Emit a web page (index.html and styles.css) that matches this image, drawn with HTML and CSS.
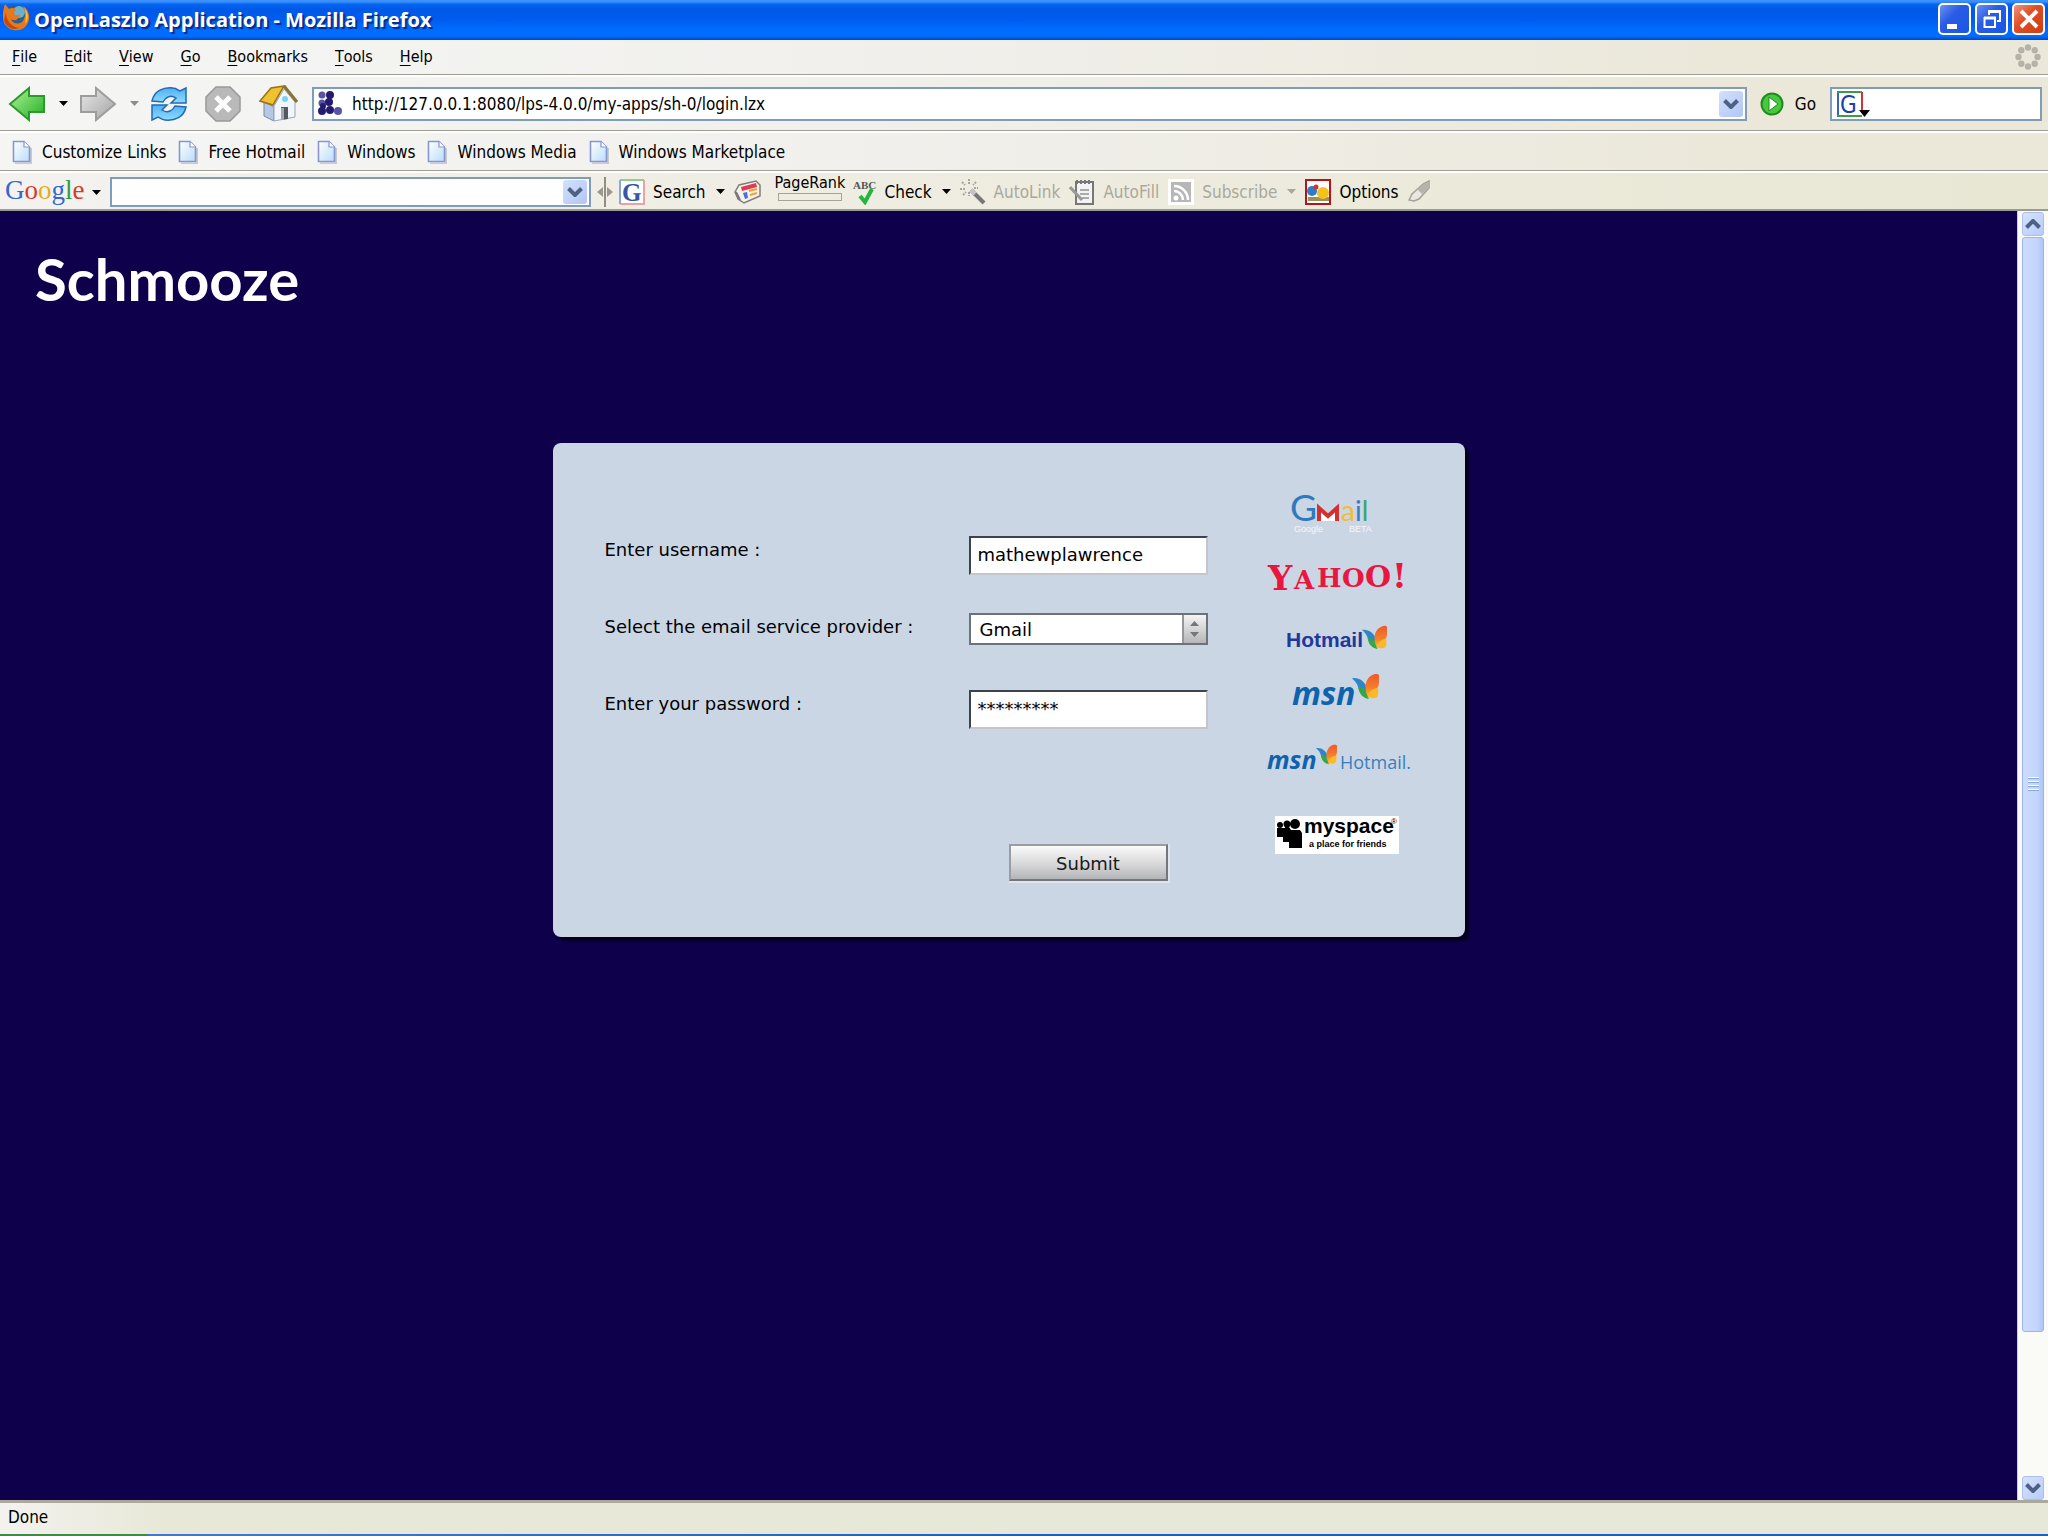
FILE: index.html
```html
<!DOCTYPE html>
<html lang="en">
<head>
    <meta charset="utf-8">
    <link rel="stylesheet" href="styles.css">

    <title>OpenLaszlo Application - Mozilla Firefox</title>
</head>
<body>
    <!-- shared icon shapes -->
    <svg class="defs" width="0" height="0" aria-hidden="true">
        <defs>
            <linearGradient id="greenFill" x1="0" y1="0" x2="1" y2="1">
                <stop offset="0" stop-color="#b4f49a"/><stop offset="1" stop-color="#1fae22"/>
            </linearGradient>
            <linearGradient id="greyFill" x1="0" y1="0" x2="1" y2="1">
                <stop offset="0" stop-color="#e8e8e8"/><stop offset="1" stop-color="#a4a4a4"/>
            </linearGradient>
            <linearGradient id="blueFill" x1="0" y1="0" x2="0" y2="1">
                <stop offset="0" stop-color="#4fb0f4"/><stop offset="1" stop-color="#8fdcff"/>
            </linearGradient>
            <linearGradient id="pageFill" x1="0" y1="0" x2="1" y2="1">
                <stop offset="0" stop-color="#ffffff"/><stop offset="1" stop-color="#b9dcfa"/>
            </linearGradient>
            <linearGradient id="wingFill" x1="0" y1="0" x2="0" y2="1">
                <stop offset="0" stop-color="#ee5a2c"/><stop offset="0.6" stop-color="#f4802c"/><stop offset="1" stop-color="#f9c62c"/>
            </linearGradient>
        </defs>
        <symbol id="page" viewBox="0 0 20 24">
            <path d="M3 23.500H19V8" fill="none" stroke="#c9c9d2" stroke-width="2"/>
            <path d="M1.500 1.500H12L17.500 7V21.500H1.500Z" fill="url(#pageFill)" stroke="#8796cf" stroke-width="1.600"/>
            <path d="M12 1.500V7H17.500" fill="#fff" stroke="#8796cf" stroke-width="1.200"/>
        </symbol>
        <symbol id="down" viewBox="0 0 9 5">
            <path d="M0 0H9L4.500 5Z" fill="currentColor"/>
        </symbol>
        <symbol id="chevron" viewBox="0 0 16 10">
            <path d="M1.500 1.500L8 8L14.500 1.500" fill="none" stroke="#4d6185" stroke-width="4"/>
        </symbol>
        <symbol id="butterfly" viewBox="0 0 26 26">
            <path d="M0 5C7 4 12 8 15 15L16 24C11 22 7 19 6 14C5 10 3 8 0 5Z" fill="#2e86c8"/>
            <path d="M6 14C9 13 13 15 15 18L16 25C10 24 7 20 6 14Z" fill="#35a648"/>
            <path d="M14 20C11 10 15 3 22 1C27 0 27 4 26 9C26 15 22 18 16 24Z" fill="url(#wingFill)"/>
            <path d="M15 24C16 18 20 15 25 14C26 20 25 24 22 24C19 25 17 23 15 24Z" fill="#fbb92a"/>
        </symbol>
    </svg>

    <header class="titlebar">
        <svg width="28" height="28" viewBox="0 0 28 28" aria-hidden="true">
            <circle cx="15" cy="13" r="11" fill="#2f5f8f"/>
            <circle cx="17" cy="9" r="6" fill="#6fb0c8"/>
            <path d="M3 1L7 6C10 4 13 5 14 7L11 11C13 12 15 12 18 12C16 18 11 18 9 16C11 22 20 22 22 16C24 12 23 7 21 3C28 7 29 17 24 23C18 30 6 28 2 20C0 14 1 7 3 1Z" fill="#e8791b"/>
            <path d="M4 9C4 16 8 24 17 25C10 28 3 23 2 17Z" fill="#c04a10"/>
            <path d="M22 5C27 10 27 17 23 21C24 16 25 10 22 5Z" fill="#fbc23a"/>
        </svg>
        <h1 class="title">OpenLaszlo Application - Mozilla Firefox</h1>
        <div class="window-buttons">
            <button class="win-btn" type="button" aria-label="Minimize">
                <svg width="26" height="26" viewBox="0 0 26 26"><path d="M5 18H15V23H5Z" fill="#fff"/></svg>
            </button>
            <button class="win-btn" type="button" aria-label="Restore">
                <svg width="26" height="26" viewBox="0 0 26 26"><path d="M10 9V5H21V15H18M5.500 12V21H16V12Z" fill="none" stroke="#fff" stroke-width="2"/><path d="M9 5.500H22M5 12H17" stroke="#fff" stroke-width="3"/></svg>
            </button>
            <button class="win-btn win-btn-close" type="button" aria-label="Close">
                <svg width="26" height="26" viewBox="0 0 26 26"><path d="M5 5L21 21M21 5L5 21" stroke="#fff" stroke-width="4"/></svg>
            </button>
        </div>
    </header>

    <nav class="bar menubar">
        <button type="button"><u>F</u>ile</button>
        <button type="button"><u>E</u>dit</button>
        <button type="button"><u>V</u>iew</button>
        <button type="button"><u>G</u>o</button>
        <button type="button"><u>B</u>ookmarks</button>
        <button type="button"><u>T</u>ools</button>
        <button type="button"><u>H</u>elp</button>
        <svg class="throbber" width="26" height="26" viewBox="0 0 26 26" fill="#b5b2aa" aria-hidden="true">
            <circle cx="13" cy="3.500" r="3.200"/><circle cx="19.700" cy="6.300" r="3.200"/><circle cx="22.500" cy="13" r="3.200"/><circle cx="19.700" cy="19.700" r="3.200"/>
            <circle cx="13" cy="22.500" r="3.200"/><circle cx="6.300" cy="19.700" r="3.200"/><circle cx="3.500" cy="13" r="3.200"/><circle cx="6.300" cy="6.300" r="3.200"/>
        </svg>
    </nav>

    <div class="bar navbar">
        <button type="button" aria-label="Back">
            <svg width="38" height="36" viewBox="0 0 38 36"><path d="M2 18L21 2V10H36V26H21V34Z" fill="url(#greenFill)" stroke="#2b9a2c" stroke-width="2"/></svg>
        </button>
        <button class="drop" type="button" aria-label="Back history"><svg width="9" height="5"><use href="#down"/></svg></button>
        <button type="button" aria-label="Forward">
            <svg width="38" height="36" viewBox="0 0 38 36"><path d="M36 18L17 2V10H2V26H17V34Z" fill="url(#greyFill)" stroke="#9d9d9d" stroke-width="2"/></svg>
        </button>
        <button class="drop drop-grey" type="button" aria-label="Forward history"><svg width="9" height="5"><use href="#down"/></svg></button>
        <button type="button" aria-label="Reload">
            <svg width="38" height="36" viewBox="0 0 38 36" fill="url(#blueFill)" stroke="#2269b8" stroke-width="1.500">
                <path d="M2 15C4 5 13 1 23 2C26 2 28 4 30 5L36 2V17H21L26 12C20 8 15 12 13 16Z"/>
                <path d="M36 21C34 31 25 35 15 34C12 34 10 32 8 31L2 34V19H17L12 24C18 28 23 24 25 20Z"/>
            </svg>
        </button>
        <button class="nav-stop" type="button" aria-label="Stop">
            <svg width="38" height="36" viewBox="0 0 38 36"><path d="M12 1H26L36 11V25L26 35H12L2 25V11Z" fill="#b9b9b9" stroke="#999" stroke-width="1.500"/><path d="M12 11L26 25M26 11L12 25" stroke="#fff" stroke-width="5"/></svg>
        </button>
        <button class="nav-home" type="button" aria-label="Home">
            <svg width="40" height="38" viewBox="0 0 40 38">
                <path d="M6 17L16 22V36L6 31Z" fill="#b6c8e4" stroke="#7689ac"/>
                <path d="M16 21L26 4L37 17V32L16 36Z" fill="#f1f5fc" stroke="#9aa5b9"/>
                <path d="M23 22H30V34L23 35Z" fill="#55585f"/><path d="M23 23H26V35H23Z" fill="#a3a9b4"/>
                <circle cx="27" cy="14" r="3" fill="#7fd0f5"/>
                <path d="M2 16L13 3L26 1L15 20Z" fill="#f0c22f" stroke="#98731a" stroke-width="1.500"/>
                <path d="M26 1L39 17" stroke="#8a7232" stroke-width="3"/>
            </svg>
        </button>
        <div class="field url">
            <svg width="25" height="25" viewBox="0 0 25 25" fill="#241a6e" aria-hidden="true">
                <circle cx="4" cy="4" r="3.500" fill="#5a54a0"/><circle cx="12" cy="4" r="4"/><circle cx="4" cy="12" r="3.500" fill="#5a54a0"/><circle cx="11" cy="11" r="4"/>
                <circle cx="4" cy="20" r="4"/><circle cx="12" cy="19" r="4"/><circle cx="20" cy="20" r="4" fill="#5a54a0"/><circle cx="5" cy="15" r="3"/>
            </svg>
            <input type="text" aria-label="Location" value="http://127.0.0.1:8080/lps-4.0.0/my-apps/sh-0/login.lzx">
            <button class="combo-btn" type="button" aria-label="Show history"><svg width="16" height="10"><use href="#chevron"/></svg></button>
        </div>
        <button class="go" type="button">
            <svg width="24" height="24" viewBox="0 0 24 24" aria-hidden="true"><circle cx="12" cy="12" r="10.500" fill="#48c83c" stroke="#208c1e" stroke-width="2"/><path d="M9 5L18 12L9 19Z" fill="#fff" stroke="#208c1e"/></svg>
            Go
        </button>
        <div class="field search">
            <svg width="36" height="28" viewBox="0 0 36 28" aria-hidden="true">
                <path d="M2 26V2" stroke="#3a62c8" stroke-width="2"/><path d="M1 2H26M1 26H26" stroke="#3f9c46" stroke-width="2"/><path d="M26 2V22" stroke="#d8322c" stroke-width="2"/>
                <text class="g-plain" x="4" y="23">G</text>
                <path d="M23 20H34L28.500 27Z" fill="#000"/>
            </svg>
            <input type="text" aria-label="Search the web">
        </div>
    </div>

    <nav class="bar bookmarks">
        <a href="#"><svg width="20" height="24"><use href="#page"/></svg>Customize Links</a>
        <a href="#"><svg width="20" height="24"><use href="#page"/></svg>Free Hotmail</a>
        <a href="#"><svg width="20" height="24"><use href="#page"/></svg>Windows</a>
        <a href="#"><svg width="20" height="24"><use href="#page"/></svg>Windows Media</a>
        <a href="#"><svg width="20" height="24"><use href="#page"/></svg>Windows Marketplace</a>
    </nav>

    <div class="bar googlebar">
        <button class="google-logo" type="button" aria-label="Google"><span class="c-blue">G</span><span class="c-red">o</span><span class="c-yellow">o</span><span class="c-blue">g</span><span class="c-green">l</span><span class="c-red">e</span><svg width="9" height="5"><use href="#down"/></svg></button>
        <div class="field google-field">
            <input type="text" aria-label="Google search">
            <button class="combo-btn" type="button" aria-label="Show searches"><svg width="16" height="10"><use href="#chevron"/></svg></button>
        </div>
        <svg class="grip" width="16" height="30" viewBox="0 0 16 30" aria-hidden="true"><path d="M8 0V30" stroke="#8f8d84" stroke-width="2"/><path d="M6 10V20L0 15ZM10 10V20L16 15Z" fill="#9a988f"/></svg>
        <button class="tool" type="button">
            <svg width="26" height="26" viewBox="0 0 26 26"><path d="M1 1H25" stroke="#8fd08f" stroke-width="2"/><path d="M25 1V25H1" fill="none" stroke="#e9a3a0" stroke-width="2"/><path d="M1 1V25" stroke="#86a8e8" stroke-width="2"/><path d="M2 2H24V24H2Z" fill="#fff"/><text class="g-serif" x="3" y="22">G</text></svg>
            Search
            <svg class="arrow" width="9" height="5"><use href="#down"/></svg>
        </button>
        <button class="tool" type="button" aria-label="News">
            <svg width="27" height="24" viewBox="0 0 27 24"><path d="M1 12L5 5L22 1L26 5V16L10 23L4 19Z" fill="#f4f1e8" stroke="#7d7d7d" stroke-width="1.500"/><path d="M7 7L22 3L23 7L8 11Z" fill="#e03a55"/><path d="M9 13L13 12L14 18L11 19Z" fill="#4a6fd8"/><path d="M15 11L23 9M16 15L23 13" stroke="#f0a030" stroke-width="2"/><path d="M2 12L6 20" stroke="#777" stroke-width="2"/></svg>
        </button>
        <div class="pagerank"><span>PageRank</span><i></i></div>
        <button class="tool" type="button">
            <svg width="24" height="26" viewBox="0 0 24 26"><text class="abc" x="0" y="10">ABC</text><path d="M7 17L12 23L19 10" fill="none" stroke="#22b63c" stroke-width="4"/></svg>
            Check
            <svg class="arrow" width="9" height="5"><use href="#down"/></svg>
        </button>
        <button class="tool tool-off" type="button">
            <svg width="26" height="26" viewBox="0 0 26 26" fill="none"><path d="M9 0V5M2 3L5 6M16 3L13 6M0 10H5M14 9H18M3 16L6 13M9 13V17" stroke="#a7a59c" stroke-width="2" stroke-dasharray="2 1"/><path d="M11 11L24 24" stroke="#777" stroke-width="4"/><path d="M11 11L15 15" stroke="#c5c5c5" stroke-width="4"/></svg>
            AutoLink
        </button>
        <button class="tool tool-off" type="button">
            <svg width="26" height="26" viewBox="0 0 26 26"><path d="M7 3H24V25H7Z" fill="#f3f3f3" stroke="#777" stroke-width="2"/><path d="M8 1V5M12 1V5M16 1V5M20 1V5" stroke="#777" stroke-width="2"/><path d="M11 11H20M11 15H20M13 19H20" stroke="#aaa" stroke-width="2"/><path d="M1 8L13 21" stroke="#999" stroke-width="3"/></svg>
            AutoFill
        </button>
        <button class="tool tool-off" type="button">
            <svg width="26" height="26" viewBox="0 0 26 26"><path d="M0 0H26V26H0Z" fill="#fff"/><path d="M3 3H23V23H3Z" fill="#b7b7b7"/><g fill="none" stroke="#fff" stroke-width="2.500"><path d="M6 12A9 9 0 0 1 15 21"/><path d="M6 7A14 14 0 0 1 20 21"/></g><circle cx="8" cy="19" r="2.500" fill="#fff"/></svg>
            Subscribe
            <svg class="arrow" width="9" height="5"><use href="#down"/></svg>
        </button>
        <button class="tool" type="button">
            <svg width="26" height="26" viewBox="0 0 26 26"><path d="M1 1H25V25H1Z" fill="#fff" stroke="#b3151b" stroke-width="2"/><path d="M3 18H24V22H3Z" fill="#9c9158"/><circle cx="7" cy="12" r="5" fill="#2d7ccc"/><circle cx="11" cy="8" r="2.500" fill="#d8322c"/><circle cx="18" cy="14" r="6" fill="#f3c31c"/></svg>
            Options
        </button>
        <button class="tool" type="button" aria-label="Highlight">
            <svg width="26" height="26" viewBox="0 0 26 26"><path d="M2 21L5 15L16 5L22 2V9L12 20L7 22Z" fill="#e9e8e0" stroke="#a3a199" stroke-width="1.500"/><path d="M10 10L15 15L22 9V3L17 5Z" fill="#b5b3ab"/></svg>
        </button>
    </div>

    <div class="viewport">
        <main class="content">
            <h2 class="brand">Schmooze</h2>

            <form class="card" action="#" method="post">
                <div class="fields">
                    <label for="username">Enter username :</label>
                    <input class="input-text" type="text" id="username" name="username" value="mathewplawrence">

                    <label for="provider">Select the email service provider :</label>
                    <div class="select">
                        <select id="provider" name="provider">
                            <option>Gmail</option>
                            <option>Yahoo</option>
                            <option>Hotmail</option>
                            <option>MSN</option>
                            <option>MySpace</option>
                        </select>
                        <span class="stepper"><svg width="9" height="18" viewBox="0 0 9 18"><path d="M0 6L4.500 1L9 6ZM0 12H9L4.500 17Z" fill="#73767a"/></svg></span>
                    </div>

                    <label for="password">Enter your password :</label>
                    <input class="input-text" type="text" id="password" name="password" value="*********" autocomplete="off">

                    <button class="submit-btn" type="submit">Submit</button>
                </div>

                <div class="logos">
                    <svg width="94" height="42" viewBox="0 0 94 42" role="img" aria-label="Gmail">
                        <text class="gm-g" x="0" y="29">G</text>
                        <path d="M29 29V16L38 24L47 16V29" fill="#fff" stroke="#d3302f" stroke-width="4"/>
                        <text class="gm-rest" x="51" y="29"><tspan fill="#eebd3a">a</tspan><tspan fill="#3a7cc4">i</tspan><tspan fill="#3fa568">l</tspan></text>
                        <text class="gm-by" x="4" y="40">Google</text>
                        <text class="gm-by" x="59" y="40">BETA</text>
                    </svg>
                    <svg width="140" height="32" viewBox="0 0 140 32" role="img" aria-label="Yahoo!">
                        <g class="yahoo">
                            <text class="y-big" x="1" y="28">Y</text><text x="27" y="27">A</text><text x="50" y="25">H</text><text x="75" y="25">O</text><text class="y-mid" x="98" y="25">O</text><text class="y-big" x="125" y="26">!</text>
                        </g>
                    </svg>
                    <svg width="104" height="28" viewBox="0 0 104 28" role="img" aria-label="Hotmail">
                        <text class="hotmail" x="1" y="23">Hotmail</text>
                        <use href="#butterfly" x="77" y="1" width="25" height="25"/>
                    </svg>
                    <svg width="90" height="36" viewBox="0 0 90 36" role="img" aria-label="msn">
                        <text class="msn" x="0" y="33">msn</text>
                        <use href="#butterfly" x="60" y="1" width="27" height="27"/>
                    </svg>
                    <svg width="144" height="30" viewBox="0 0 144 30" role="img" aria-label="msn Hotmail">
                        <text class="msn-small" x="2" y="26">msn</text>
                        <use href="#butterfly" x="51" y="1" width="21" height="21"/>
                        <text class="hotmail-light" x="75" y="26">Hotmail.</text>
                    </svg>
                    <svg class="myspace" width="124" height="38" viewBox="0 0 124 38" role="img" aria-label="myspace, a place for friends">
                        <circle cx="5" cy="9" r="3"/><circle cx="12" cy="8" r="3.500"/><circle cx="20" cy="8" r="5"/>
                        <path d="M2 12H10V11H14L16 14H25L27 17V32H14V26H8V21H2Z"/>
                        <text class="my-name" x="29" y="17">myspace</text>
                        <text class="my-reg" x="116" y="8">®</text>
                        <text class="my-tag" x="34" y="31">a place for friends</text>
                    </svg>
                </div>
            </form>
        </main>

        <div class="scrollbar">
            <button type="button" aria-label="Scroll up"><svg class="flip" width="16" height="10"><use href="#chevron"/></svg></button>
            <div class="thumb"><i></i><i></i><i></i><i></i></div>
            <button class="scroll-down" type="button" aria-label="Scroll down"><svg width="16" height="10"><use href="#chevron"/></svg></button>
        </div>
    </div>

    <footer class="statusbar">Done</footer>
    <div class="taskbar"><div class="start"></div></div>
</body>
</html>
```
FILE: styles.css
```css
* {
    box-sizing: border-box;
}

body {
    margin: 0;
    height: 100vh;
    display: flex;
    flex-direction: column;
    overflow: hidden;
    background: #0f004c;
    color: #000;
    font-family: "DejaVu Sans Condensed", "DejaVu Sans", sans-serif;
    font-size: 17px;
    line-height: 20px;
}

svg {
    display: block;
    flex: none;
}

.defs {
    position: absolute;
}

button {
    display: flex;
    align-items: center;
    flex: none;
    padding: 0;
    border: none;
    background: none;
    color: inherit;
    font: inherit;
    white-space: nowrap;
}

input, select {
    min-width: 0;
    padding: 0;
    border: none;
    border-radius: 0;
    background: none;
    color: inherit;
    font: inherit;
    outline: none;
}

/* title bar */
.titlebar {
    flex: none;
    display: flex;
    align-items: flex-start;
    height: 40px;
    padding: 3px 3px 0 2px;
    background: linear-gradient(#3f93ff 0, #3a8cf8 2px, #0468f4 4px, #0058e6 9px, #005cf0 20px, #006cff 29px, #006eff 36px, #0050d8 39px, #0046c8 40px);
}

.title {
    flex: 1;
    margin: 0 0 0 4px;
    color: #fff;
    font-family: "Open Sans", sans-serif;
    font-size: 20px;
    font-weight: bold;
    line-height: 34px;
    text-shadow: 2px 2px 1px #0a2a8c;
}

.window-buttons {
    display: flex;
    gap: 4px;
}

.win-btn {
    width: 33px;
    height: 32px;
    justify-content: center;
    border: 2px solid #fff;
    border-radius: 5px;
    background: linear-gradient(135deg, #6d92f2, #2a5ce4 40%, #1a56e6);
}

.win-btn-close {
    background: linear-gradient(135deg, #f0937c, #dd4c22 45%, #cf3f14);
}

/* toolbars */
.bar {
    flex: none;
    display: flex;
    align-items: center;
    border-bottom: 1px solid #a09e92;
    box-shadow: inset 0 2px 0 #fff;
    background: linear-gradient(90deg, #f5f6f4, #f1f0ed 40%, #ebe8da 85%);
}

.menubar {
    height: 35px;
    gap: 27px;
    padding: 0 7px 0 12px;
    box-shadow: none;
    font-size: 16px;
}

.menubar u {
    text-underline-offset: 3px;
}

.throbber {
    margin-left: auto;
}

.navbar {
    height: 56px;
    padding: 2px 6px 0 8px;
}

.drop {
    margin: 0 11px 0 13px;
}

.drop-grey {
    color: #8c8c8c;
}

.nav-stop {
    margin-left: 16px;
}

.nav-home {
    margin: 0 14px 0 16px;
}

.field {
    display: flex;
    align-items: center;
    border: 2px solid #7f9db9;
    background: #fff;
}

.field input {
    flex: 1;
}

.url {
    flex: 1;
    height: 34px;
    padding: 0 2px 0 4px;
}

.url svg + input {
    margin-left: 9px;
}

.combo-btn {
    width: 24px;
    height: 26px;
    justify-content: center;
    border-radius: 3px;
    background: linear-gradient(135deg, #d3e0fd, #b1c6f4);
}

.go {
    gap: 11px;
    margin: 0 14px 0 13px;
}

.search {
    width: 212px;
    height: 34px;
    padding-left: 4px;
}

.g-plain {
    font: 24px "DejaVu Sans Condensed", sans-serif;
    fill: #2140b0;
}

.g-serif {
    font: bold 25px "Liberation Serif", serif;
    fill: #3556a8;
}

.bookmarks {
    height: 40px;
    gap: 12px;
    padding: 2px 12px 0;
}

.bookmarks a {
    display: flex;
    align-items: center;
    gap: 10px;
    color: inherit;
    text-decoration: none;
}

.googlebar {
    height: 40px;
    padding: 3px 0 0 5px;
    gap: 9px;
    border-bottom: 2px solid #9c9b92;
    background: linear-gradient(90deg, #f3f2ef, #eeecdf 50%, #e8e7d4);
}

.google-logo {
    width: 96px;
    height: 36px;
    padding-bottom: 4px;
    font-family: "Liberation Serif", serif;
    font-size: 27px;
}

.google-logo svg {
    margin: 6px 0 0 auto;
}

.c-blue { color: #3466d4; }
.c-red { color: #d43a2c; }
.c-yellow { color: #e2ae1c; }
.c-green { color: #2c9c40; }

.google-field {
    width: 481px;
    height: 30px;
    padding-right: 2px;
}

.googlebar .combo-btn {
    height: 24px;
}

.grip {
    margin: 0 -3px;
}

.tool {
    gap: 8px;
}

.tool-off {
    color: #aaa89c;
}

.arrow {
    margin-left: 2px;
}

.pagerank {
    width: 72px;
    margin: 0 -3px 0 5px;
    font-size: 16px;
    line-height: 14px;
}

.pagerank i {
    display: block;
    width: 64px;
    height: 8px;
    margin: 3px 0 6px 3px;
    border: 1px solid #a5a39a;
}

.abc {
    font: bold 11px "Liberation Serif", serif;
    fill: #555;
}

/* page area */
.viewport {
    flex: 1;
    display: flex;
    min-height: 0;
}

.content {
    flex: 1;
    background: #0f004c;
}

.brand {
    margin: 37px 0 134px 35px;
    color: #fff;
    font-family: Lato, sans-serif;
    font-size: 58px;
    font-weight: bold;
    line-height: 61px;
}

.card {
    display: flex;
    width: 912px;
    min-height: 494px;
    margin: 0 auto;
    padding: 0 50px 0 52px;
    border-radius: 8px;
    background: #cbd6e4;
    box-shadow: 4px 4px 3px #04001c;
    font-family: "DejaVu Sans", sans-serif;
    font-size: 18px;
}

.fields {
    display: grid;
    grid-template-columns: 364px 239px;
    grid-auto-rows: 77px;
    align-items: start;
    padding-top: 93px;
}

.fields label {
    line-height: 28px;
}

.input-text {
    height: 39px;
    padding: 0 0 3px 7px;
    border: 2px solid;
    border-color: #3c434e #c4c6cc #c4c6cc #3c434e;
    background: #fff;
}

.select {
    display: flex;
    height: 32px;
    border: 2px solid #6b7278;
    background: #fff;
}

.select select {
    flex: 1;
    padding: 2px 0 0 9px;
    appearance: none;
}

.stepper {
    display: flex;
    align-items: center;
    justify-content: center;
    width: 24px;
    border-left: 2px solid #94979a;
    background: linear-gradient(#f4f4f4, #b4b6b8);
}

.submit-btn {
    grid-area: 5 / 2;
    justify-self: center;
    justify-content: center;
    width: 159px;
    height: 37px;
    padding-top: 2px;
    border: 2px solid;
    border-color: #9b9da3 #73777c #73777c #9b9da3;
    box-shadow: 1px 1px 0 1px #dfe5ee;
    background: linear-gradient(#fafafa, #d8d8da 55%, #b4b5b7);
    color: #1a1a1a;
}

.logos {
    display: grid;
    grid-template-rows: 64px 66px 54px 50px 86px 68px;
    align-content: start;
    align-items: center;
    justify-items: center;
    width: 154px;
    margin-left: 52px;
    padding-top: 38px;
}

.logos svg {
    overflow: visible;
}

.gm-g {
    font: 37px Lato, sans-serif;
    fill: #2f79bf;
}

.gm-rest {
    font: 28px Lato, sans-serif;
}

.gm-by {
    font: 9px "Liberation Sans", sans-serif;
    fill: #f4f6f9;
}

.yahoo {
    font: bold 26px "DejaVu Serif", serif;
    fill: #e8173f;
}

.yahoo .y-mid {
    font-size: 30px;
}

.yahoo .y-big {
    font-size: 34px;
}

.hotmail {
    font: bold 21px "Liberation Sans", sans-serif;
    fill: #22389c;
}

.msn {
    font: italic bold 32px "Open Sans", sans-serif;
    fill: #0f63ae;
}

.msn-small {
    font: italic bold 25px "Open Sans", sans-serif;
    fill: #0f63ae;
}

.hotmail-light {
    font: 18px "Open Sans", sans-serif;
    fill: #3a7fbd;
}

.myspace {
    background: #fff;
}

.my-name {
    font: bold 21px "Liberation Sans", sans-serif;
}

.my-reg {
    font: 8px "Liberation Sans", sans-serif;
}

.my-tag {
    font: bold 9px "Liberation Sans", sans-serif;
}

/* scroll bar */
.scrollbar {
    display: flex;
    flex-direction: column;
    flex: none;
    width: 31px;
    padding: 1px 4px 0 4px;
    border-left: 1px solid #cfcdc4;
    background: #fafaf6;
}

.scrollbar button {
    height: 24px;
    justify-content: center;
    border: 1px solid #aebfe4;
    border-radius: 3px;
    background: linear-gradient(135deg, #d6e2fe, #b7ccfa);
}

.flip {
    transform: rotate(180deg);
}

.thumb {
    display: flex;
    flex-direction: column;
    align-items: center;
    justify-content: center;
    gap: 2px;
    height: 85%;
    margin-top: 1px;
    border: 1px solid #9db4e6;
    border-radius: 3px;
    background: linear-gradient(90deg, #cddbfd, #c3d5fd 70%, #afc5f5);
}

.thumb i {
    width: 11px;
    height: 2px;
    border-top: 1px solid #fff;
    border-bottom: 1px solid #8ca6dc;
}

.scrollbar .scroll-down {
    margin-top: auto;
}

/* bottom edge */
.statusbar {
    flex: none;
    height: 34px;
    padding: 0 8px;
    border-top: 3px solid #aaa99c;
    background: linear-gradient(90deg, #f3f2ee, #e8e8d8 8%);
    line-height: 29px;
}

.taskbar {
    flex: none;
    height: 2px;
    background: linear-gradient(90deg, #4a7bd0, #1c62c0 50%);
}

.start {
    width: 148px;
    height: 2px;
    background: #3c8c44;
}
```
